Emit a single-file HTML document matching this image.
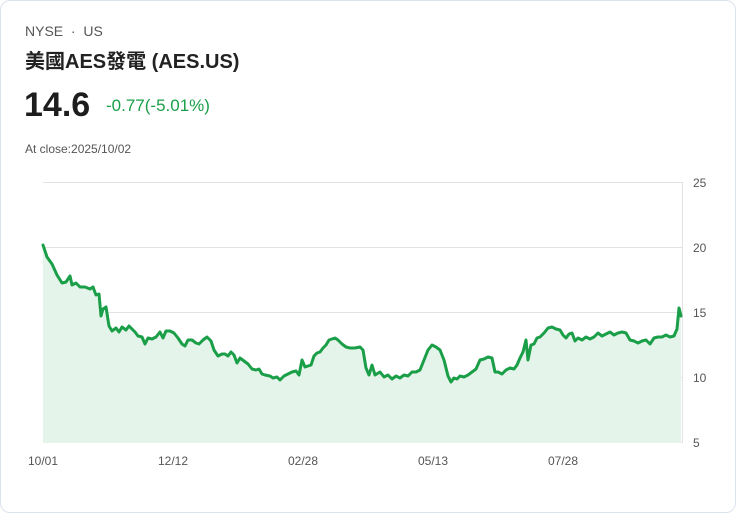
<!DOCTYPE html>
<html><head><meta charset="utf-8"><style>
html,body{margin:0;padding:0;background:#fff;}
body{width:736px;height:513px;position:relative;overflow:hidden;font-family:"Liberation Sans","Noto Sans CJK TC",sans-serif;}
.card{position:absolute;left:0;top:0;width:734px;height:511px;border:1px solid #dde3ec;border-radius:10px;}
.t{position:absolute;white-space:nowrap;}
</style></head><body>
<div class="card"></div>
<div class="t" style="left:25px;top:23px;font-size:14px;color:#555;">NYSE &nbsp;·&nbsp; US</div>
<div class="t" style="left:25px;top:45px;font-size:20px;font-weight:bold;color:#222;">美國AES發電 (AES.US)</div>
<div class="t" style="left:24px;top:86px;font-size:34px;font-weight:bold;color:#1d1d1d;">14.6</div>
<div class="t" style="left:106px;top:96px;font-size:17px;color:#1a9f48;">-0.77(-5.01%)</div>
<div class="t" style="left:25px;top:142px;font-size:12px;color:#555;">At close:2025/10/02</div>
<svg width="736" height="513" style="position:absolute;left:0;top:0" font-family="Liberation Sans, sans-serif" font-size="12" fill="#555">
<g stroke="#e2e2e2" stroke-width="1">
<line x1="43" y1="182.5" x2="682" y2="182.5"/><line x1="43" y1="247.5" x2="682" y2="247.5"/><line x1="43" y1="312.5" x2="682" y2="312.5"/><line x1="43" y1="377.5" x2="682" y2="377.5"/><line x1="43" y1="442.5" x2="682" y2="442.5"/><line x1="682.5" y1="182" x2="682.5" y2="443"/>
</g>
<text x="693" y="187">25</text><text x="693" y="252">20</text><text x="693" y="317">15</text><text x="693" y="382">10</text><text x="693" y="447">5</text>
<text x="28" y="465">10/01</text><text x="158" y="465">12/12</text><text x="288" y="465">02/28</text><text x="418" y="465">05/13</text><text x="548" y="465">07/28</text>
<polygon fill="#e5f4ea" points="43,443 43,245 47,257 52,264 57,275 62,283 66,282 70,276 72,285 76,283 80,287 85,287 90,289 93,287 96,295 99,294 101,316 103,309 106,307 109,326 112,331 116,328 119,332 122,327 126,330 129,326 132,329 135,332 138,336 142,337 145,344 148,338 152,339 156,337 160,332 163,338 166,331 170,331 174,333 178,338 182,344 185,346 188,340 192,340 196,343 199,344 203,340 207,337 211,341 214,350 218,356 222,354 225,354 228,356 231,352 234,355 237,363 240,358 244,361 248,364 252,369 256,370 259,369 262,374 265,375 270,376 273,378 277,377 280,380 284,376 288,374 292,372 296,371 299,375 302,360 305,367 308,366 311,365 314,356 317,353 320,352 323,348 326,345 329,340 332,339 335,338 338,340 342,344 346,347 350,348 355,348 360,347 363,350 366,368 369,375 372,365 375,375 380,372 384,377 388,375 392,379 396,376 400,378 404,375 408,376 412,372 416,372 420,370 424,360 428,350 432,345 436,347 440,350 444,360 448,376 451,382 454,378 457,379 460,376 464,377 468,375 472,372 476,369 480,360 484,359 488,357 492,358 495,372 498,372 502,374 506,370 510,368 514,369 517,365 520,358 523,352 526,340 528,360 531,345 534,344 537,338 540,337 544,333 548,328 552,327 556,329 560,330 563,335 566,338 569,334 572,333 575,341 578,338 582,340 586,337 590,339 594,337 598,333 602,336 606,334 610,332 614,335 618,333 622,332 626,333 630,340 634,341 638,343 642,341 646,340 650,344 654,338 658,337 662,337 666,335 670,337 674,336 677,329 679,308 681,316 681,443"/>
<polyline fill="none" stroke="#1a9f48" stroke-width="3" stroke-linejoin="round" stroke-linecap="round" points="43,245 47,257 52,264 57,275 62,283 66,282 70,276 72,285 76,283 80,287 85,287 90,289 93,287 96,295 99,294 101,316 103,309 106,307 109,326 112,331 116,328 119,332 122,327 126,330 129,326 132,329 135,332 138,336 142,337 145,344 148,338 152,339 156,337 160,332 163,338 166,331 170,331 174,333 178,338 182,344 185,346 188,340 192,340 196,343 199,344 203,340 207,337 211,341 214,350 218,356 222,354 225,354 228,356 231,352 234,355 237,363 240,358 244,361 248,364 252,369 256,370 259,369 262,374 265,375 270,376 273,378 277,377 280,380 284,376 288,374 292,372 296,371 299,375 302,360 305,367 308,366 311,365 314,356 317,353 320,352 323,348 326,345 329,340 332,339 335,338 338,340 342,344 346,347 350,348 355,348 360,347 363,350 366,368 369,375 372,365 375,375 380,372 384,377 388,375 392,379 396,376 400,378 404,375 408,376 412,372 416,372 420,370 424,360 428,350 432,345 436,347 440,350 444,360 448,376 451,382 454,378 457,379 460,376 464,377 468,375 472,372 476,369 480,360 484,359 488,357 492,358 495,372 498,372 502,374 506,370 510,368 514,369 517,365 520,358 523,352 526,340 528,360 531,345 534,344 537,338 540,337 544,333 548,328 552,327 556,329 560,330 563,335 566,338 569,334 572,333 575,341 578,338 582,340 586,337 590,339 594,337 598,333 602,336 606,334 610,332 614,335 618,333 622,332 626,333 630,340 634,341 638,343 642,341 646,340 650,344 654,338 658,337 662,337 666,335 670,337 674,336 677,329 679,308 681,316"/>
</svg>
</body></html>
